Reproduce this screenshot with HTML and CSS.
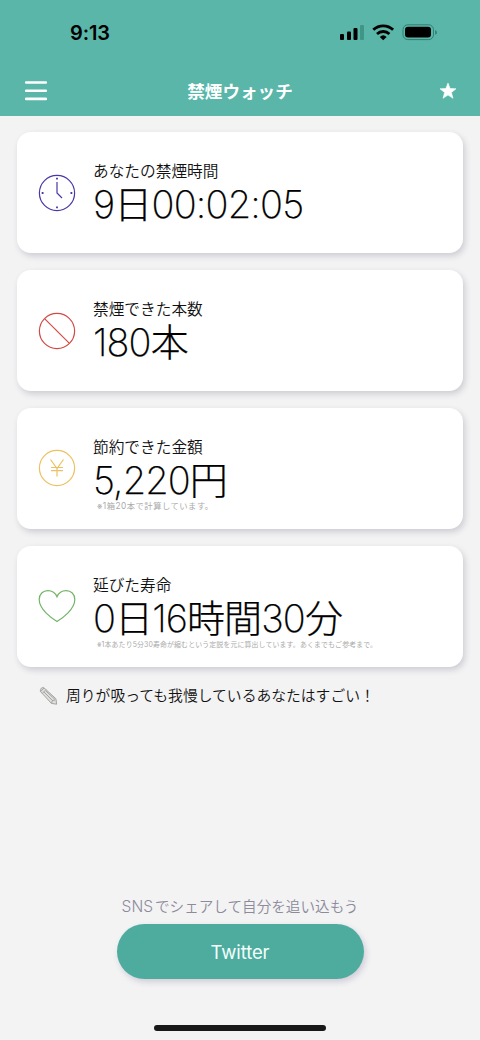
FILE: index.html
```html
<!DOCTYPE html>
<html lang="ja">
<head>
<meta charset="utf-8">
<title>禁煙ウォッチ</title>
<link rel="stylesheet" href="styles.css">
</head>
<body>
<div class="app">
  <header class="header">
    <div class="status">
      <span class="time">9:13</span>
      <svg class="status-icons" width="100" height="18" viewBox="0 0 100 18">
        <rect x="1" y="10" width="4" height="6" rx="1"/><rect x="8" y="7.5" width="4" height="8.5" rx="1"/><rect x="14.5" y="4" width="4" height="12" rx="1"/><rect x="21" y="1" width="4" height="15" rx="1" fill="#3f9687"/>
        <g fill="none" stroke="#000" stroke-width="2.8"><path d="M34.3 5.8a14.2 14.2 0 0 1 19.8 0"/><path d="M38 10a9 9 0 0 1 12.4 0"/></g>
        <path d="M44.2 16.2 40.8 12.9a5 5 0 0 1 6.8 0z"/>
        <rect x="64" y=".8" width="30.5" height="14.8" rx="4.8" fill="none" stroke="#317f71"/>
        <rect x="66" y="2.8" width="26" height="10.8" rx="3"/>
        <path d="M96.2 6v4.7q1.8-.6 1.8-2.3t-1.8-2.4z" fill="#317f71"/>
      </svg>
    </div>
    <div class="nav">
      <svg width="24" height="22" viewBox="0 0 24 22"><path d="M2.2 2.5h19.6M2.2 10.7h19.6M2.2 18.9h19.6" stroke="#fff" stroke-width="2.6" stroke-linecap="round"/></svg>
      <h1 class="title">禁煙ウォッチ</h1>
      <svg class="star" width="20" height="20" viewBox="0 0 20 20"><path d="m10 2 2.1 5.5 5.9.3-4.6 3.7 1.6 5.8-5-3.3-5 3.3 1.6-5.8L2 7.8l5.9-.3z" fill="#fff" stroke="#fff" stroke-width=".6" stroke-linejoin="round"/></svg>
    </div>
  </header>
  <main class="cards">
    <section class="card">
      <svg class="icon" viewBox="0 0 38 38" stroke="#4c35a8"><circle cx="19" cy="19" r="17.6"/><path d="M19 8v11l5 5"/><path d="M19 3.7V5.5M19 32.5v1.8M3.7 19h1.8M32.5 19h1.8" stroke-width="1.8"/></svg>
      <div class="body"><p class="label">あなたの禁煙時間</p><p class="value clock">9日00:02:05</p></div>
    </section>
    <section class="card">
      <svg class="icon" viewBox="0 0 38 38" stroke="#d14b45"><circle cx="19" cy="19" r="17.6"/><path d="m6.8 6.8 24.4 24.4"/></svg>
      <div class="body"><p class="label">禁煙できた本数</p><p class="value">180本</p></div>
    </section>
    <section class="card">
      <svg class="icon" viewBox="0 0 38 38" stroke="#eec062"><circle cx="19" cy="19" r="17.6"/><path d="m12.5 10.5 6.5 9 6.5-9M19 19.5v8M13 18.5h12M13 21.7h12"/></svg>
      <div class="body"><p class="label">節約できた金額</p><p class="value">5,220円</p><p class="note">※1箱20本で計算しています。</p></div>
    </section>
    <section class="card">
      <svg class="icon" viewBox="0 0 38 38" stroke="#72b566"><path d="M19 34.5C14 31.5 1.2 22.5 1.2 12.5 1.2 7 5 3.6 9.8 3.6c4.3 0 7.8 2.7 9.2 6.2 1.4-3.5 4.9-6.2 9.2-6.2 4.8 0 8.6 3.4 8.6 8.9 0 10-12.8 19-17.8 22z"/></svg>
      <div class="body"><p class="label">延びた寿命</p><p class="value">0日16時間30分</p><p class="note small">※1本あたり5分30寿命が縮むという定説を元に算出しています。あくまでもご参考まで。</p></div>
    </section>
  </main>
  <div class="message">
    <svg width="20" height="20" viewBox="0 0 20 20" fill="none" stroke="#a5a5a5" stroke-width="1"><path d="m2.2 2.2 2.3-.8 12.4 11.3.8 5.5-5.3-.8L1.2 5.2z" fill="#dededb"/><path d="M1.7 5.5 5 2M3.5 7.2 7 3.7M5 6l9 9M7 5l9 8.5M12.4 17.4l1-2.7 2.7-.8"/></svg>
    <span class="praise">周りが吸っても我慢しているあなたはすごい！</span>
  </div>
  <footer class="share">
    <p class="prompt"><span class="latin">SNS</span>でシェアして自分を追い込もう</p>
    <button class="button">Twitter</button>
    <div class="home"></div>
  </footer>
</div>
</body>
</html>
```
FILE: styles.css
```css
* { box-sizing: border-box; margin: 0; }
body { background: #f3f3f4; color: #111; font-family: Inter, "Noto Sans CJK JP", sans-serif; }
svg { display: block; flex: none; }
.app { width: 480px; height: 1040px; display: flex; flex-direction: column; overflow: hidden; }
.header { height: 116px; flex: none; background: #59b6a9; }
.status { height: 66px; padding: 0 41px 0 70px; display: flex; align-items: center; justify-content: space-between; }
.time { font-size: 20px; font-weight: 600; letter-spacing: -.1px; color: #000; }
.status-icons { margin-top: -1px; }
.nav { height: 50px; padding: 0 22px 0 24px; display: grid; grid-template-columns: 24px 1fr 24px; align-items: center; }
.star { justify-self: end; }
.title { color: #fff; font-size: 17.6px; line-height: 26px; font-weight: 600; text-align: center; padding: 1px 2px 0 0; }
.cards { padding: 16.4px 17px 0; display: flex; flex-direction: column; gap: 16.8px; }
.card { height: 121px; padding-left: 21px; display: flex; align-items: center; gap: 17px; background: #fff; border-radius: 14px; box-shadow: 2px 3px 6px rgba(55, 50, 75, .2); }
.icon { width: 38px; height: 38px; fill: none; stroke-width: 1.2; }
.body { height: 121px; padding-top: 29px; white-space: nowrap; }
.label { font-size: 15.7px; line-height: 22px; font-weight: 350; }
.value { font-size: 38px; line-height: 42px; font-weight: 250; letter-spacing: -.9px; color: #000; -webkit-text-stroke: .25px #000; }
.clock { letter-spacing: -.8px; }
.note { margin-left: 4px; font-size: 8.3px; line-height: 11px; letter-spacing: .5px; color: #aaa; }
.small { font-size: 6.9px; line-height: 12px; letter-spacing: .15px; }
.message { padding: 17px 0 0 39px; display: flex; align-items: center; gap: 7px; }
.praise { font-size: 14.8px; line-height: 24px; font-weight: 350; }
.share { margin-top: auto; display: flex; flex-direction: column; align-items: center; }
.prompt { color: #8c8a9b; font-size: 14.6px; line-height: 24px; font-weight: 350; white-space: nowrap; }
.latin { font-size: 15.5px; margin-right: 2px; }
.button { width: 247px; height: 55px; margin-top: 5px; border: 0; border-radius: 28px; background: #4dac9e; color: #f3fffc; font: 400 18.5px/55px Inter, sans-serif; letter-spacing: -.1px; padding: 1px 0 0; box-shadow: 2px 3px 6px rgba(70, 50, 100, .2); }
.home { width: 172px; height: 5.5px; margin: 46px 0 9.5px; border-radius: 3px; background: #181818; }
```
